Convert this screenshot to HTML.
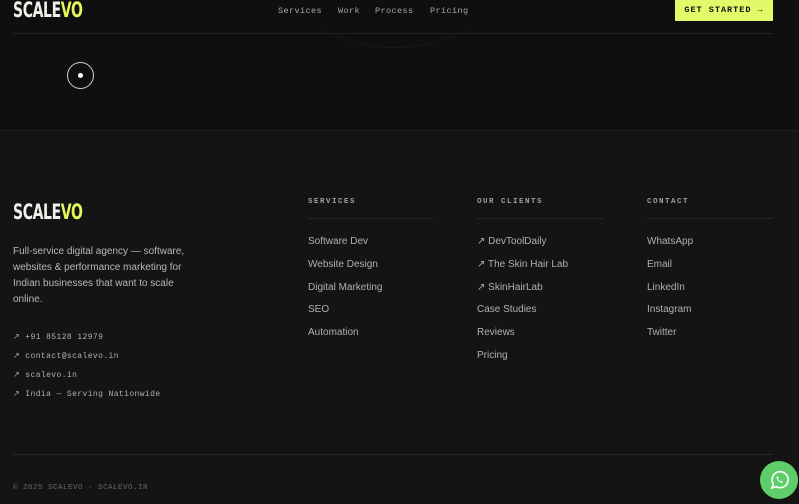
<!DOCTYPE html>
<html><head><meta charset="utf-8"><style>
*{margin:0;padding:0;box-sizing:border-box}
body{width:799px;height:500px;overflow:hidden;background:#141414;font-family:"Liberation Sans",sans-serif;position:relative;color:#bdbdbd}
.top{position:absolute;left:0;top:0;width:799px;height:131px;background:#0f0f0f;border-bottom:1px solid #1f1f1f}
.logo{position:absolute;font-family:"DejaVu Sans Condensed","Liberation Sans",sans-serif;font-weight:bold;color:#f0f0ea;letter-spacing:-0.5px;transform:scaleX(0.74);transform-origin:left top;line-height:1}
.logo span{color:#e4f65a}
.nav{position:absolute;top:6px;font-family:"Liberation Mono",monospace;font-size:8.5px;color:#a8a8a8;letter-spacing:0.4px;white-space:nowrap}
.btn{position:absolute;left:675px;top:-1px;width:98px;height:22px;background:#e4f96a;color:#111;font-family:"Liberation Mono",monospace;font-size:8.5px;font-weight:bold;letter-spacing:1px;text-align:center;line-height:23px}
.mono{font-family:"Liberation Mono",monospace}
.h{position:absolute;top:198px;font-family:"Liberation Mono",monospace;font-size:7.5px;letter-spacing:1.5px;color:#a0a0a0;font-weight:bold}
.hl{position:absolute;top:218px;width:126px;height:1px;background:#262626}
.col{position:absolute;top:231px;font-size:10px;color:#b0b0b0;line-height:22.8px;white-space:nowrap}
.ci{position:absolute;left:13px;font-family:"Liberation Mono",monospace;font-size:8px;color:#b0b0b0;letter-spacing:0.4px}
</style></head><body>
<div class="top">
<div class="logo" style="left:13px;top:0px;font-size:21px">SCALE<span>VO</span></div>
<div class="nav" style="left:278px">Services</div>
<div class="nav" style="left:338px">Work</div>
<div class="nav" style="left:375px">Process</div>
<div class="nav" style="left:430px">Pricing</div>
<div class="btn">GET STARTED →</div>
<div style="position:absolute;left:13px;top:33px;width:760px;height:1px;background:#222"></div>
<div style="position:absolute;left:300px;top:-60px;width:190px;height:108px;border-radius:50%;border-bottom:1px solid #1a1a16"></div>
<div style="position:absolute;left:67px;top:62px;width:27px;height:27px;border:1.5px solid #cfcfcf;border-radius:50%"></div>
<div style="position:absolute;left:78px;top:73px;width:5px;height:5px;background:#fff;border-radius:50%"></div>
</div>
<div class="logo" style="left:13px;top:202px;font-size:21px">SCALE<span>VO</span></div>
<div style="position:absolute;left:13px;top:244px;width:180px;font-size:10px;line-height:16px;color:#b8b8b8">Full-service digital agency — software, websites &amp; performance marketing for Indian businesses that want to scale online.</div>
<div class="ci" style="top:332px">↗ +91 85128 12979</div>
<div class="ci" style="top:351px">↗ contact@scalevo.in</div>
<div class="ci" style="top:370px">↗ scalevo.in</div>
<div class="ci" style="top:389px">↗ India — Serving Nationwide</div>
<div class="h" style="left:308px">SERVICES</div><div class="hl" style="left:308px"></div>
<div class="h" style="left:477px">OUR CLIENTS</div><div class="hl" style="left:477px"></div>
<div class="h" style="left:647px">CONTACT</div><div class="hl" style="left:647px"></div>
<div class="col" style="left:308px">Software Dev<br>Website Design<br>Digital Marketing<br>SEO<br>Automation</div>
<div class="col" style="left:477px">↗ DevToolDaily<br>↗ The Skin Hair Lab<br>↗ SkinHairLab<br>Case Studies<br>Reviews<br>Pricing</div>
<div class="col" style="left:647px">WhatsApp<br>Email<br>LinkedIn<br>Instagram<br>Twitter</div>
<div style="position:absolute;left:13px;top:454px;width:760px;height:1px;background:#262626"></div>
<div class="mono" style="position:absolute;left:13px;top:484px;font-size:7.5px;color:#6a6a6a;letter-spacing:0.5px">© 2025 SCALEVO · SCALEVO.IN</div>
<div style="position:absolute;left:760px;top:461px;width:38px;height:38px;border-radius:50%;background:#5fce6a">
<svg width="38" height="38" viewBox="0 0 38 38"><path d="M12 27l1.3-4A8 8 0 1 1 16 25.6z" fill="none" stroke="#fff" stroke-width="1.6"/><path d="M16.5 15.5c0 3 2.5 6 5.5 6.5l1-1.3-1.6-.9-.7.7c-1.2-.5-2.3-1.6-2.8-2.8l.7-.7-.9-1.6z" fill="#fff"/></svg>
</div>
</body></html>
